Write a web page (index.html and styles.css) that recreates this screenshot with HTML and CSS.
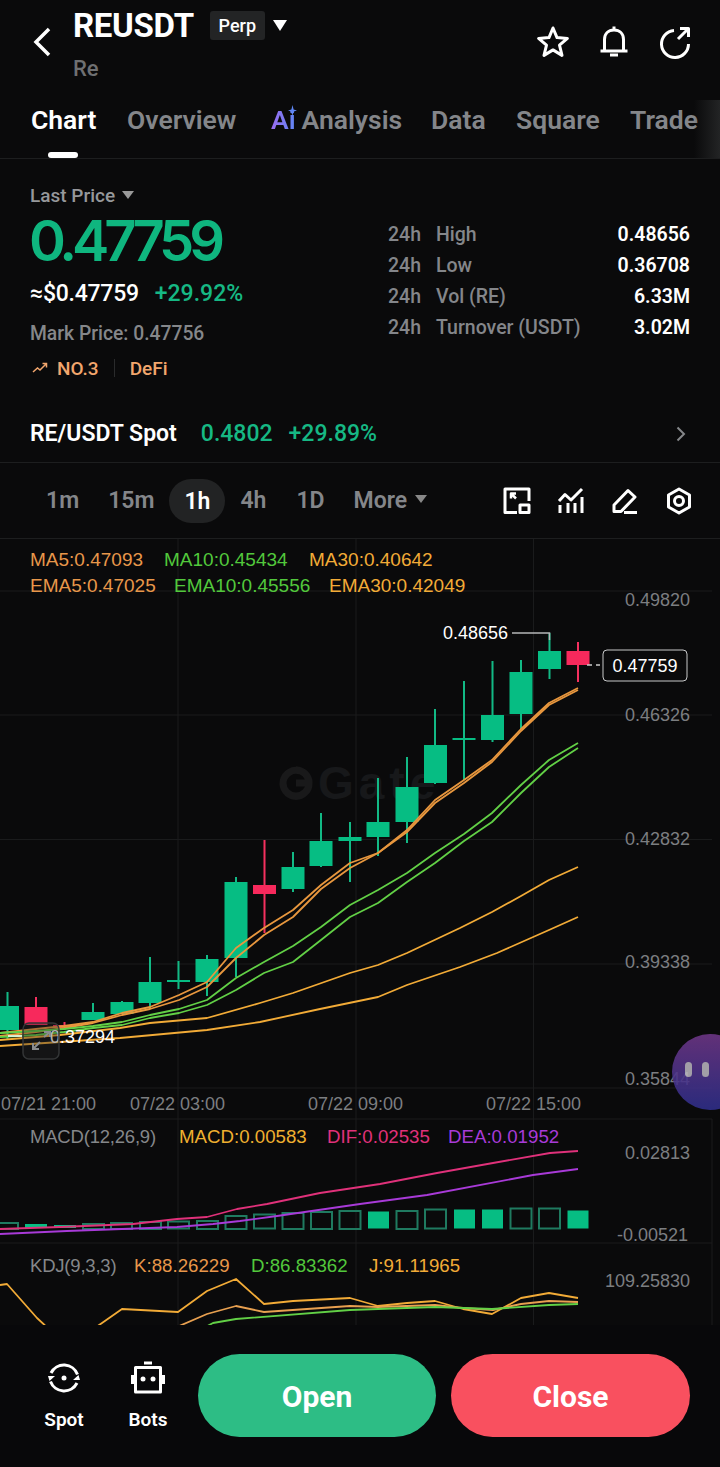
FILE: index.html
```html
<!DOCTYPE html>
<html>
<head>
  <meta charset="UTF-8">
  <title>REUSDT Perp</title>
  <link rel="stylesheet" href="styles.css">
</head>
<body>
<div class="page">

  <div class="header">
    <svg class="back" width="20" height="32" viewBox="0 0 20 32"><path d="M17 3 L4 16 L17 29" /></svg>
    <div class="titleCol">
      <div class="titleRow">
        <span class="symbol">REUSDT</span>
        <span class="badge">Perp</span>
        <span class="caret caretBig"></span>
      </div>
      <div class="subName">Re</div>
    </div>
    <div class="headerIcons">
      <svg class="icon" width="36" height="36" viewBox="0 0 36 36"><path d="M18 4 L22 13.6 L32.4 14.4 L24.5 21.2 L27 31.4 L18 25.9 L9 31.4 L11.5 21.2 L3.6 14.4 L14 13.6 Z" /></svg>
      <svg class="icon" width="36" height="36" viewBox="0 0 36 36"><path d="M8.500 27 V15.500 C8.500 9.500 12.500 6 18 6 C23.500 6 27.500 9.500 27.500 15.500 V27 M4.500 27 H31.500 M18 2.500 V6" /><path class="solid" d="M14 29.500 H22 V32.500 H14 Z" /></svg>
      <svg class="icon" width="36" height="36" viewBox="0 0 36 36"><path d="M17 6.500 A13.500 13.500 0 1 0 31.500 20 M21 15 L31 5 M23 4.500 H31.500 V13" /></svg>
    </div>
  </div>

  <div class="tabs">
    <span class="tab tabActive">Chart</span>
    <span class="tab">Overview</span>
    <span class="tab tabAi"><span class="aiMark">Ai<svg class="spark" width="9" height="11" viewBox="0 0 9 11"><path d="M4.500 0 L5.600 4.400 L9 5.500 L5.600 6.600 L4.500 11 L3.400 6.600 L0 5.500 L3.400 4.400 Z" /></svg></span>Analysis</span>
    <span class="tab">Data</span>
    <span class="tab">Square</span>
    <span class="tab">Trade</span>
    <div class="tabFade"></div>
  </div>

  <div class="stats">
    <div class="priceCol">
      <div class="priceLabel">Last Price <span class="caret caretSmall"></span></div>
      <div class="bigPrice">0.47759</div>
      <div class="subPrice"><span class="usd">≈$0.47759</span><span class="pct">+29.92%</span></div>
      <div class="markPrice">Mark Price: 0.47756</div>
      <div class="tags">
        <svg width="16" height="12" viewBox="0 0 16 12"><path d="M1 10 L5.500 6 L8 8 L14 2 M10.500 1.500 H14.500 V5.500" /></svg>
        <span class="rank">NO.3</span>
        <span class="tagLine"></span>
        <span>DeFi</span>
      </div>
    </div>
    <div class="statsCol">
      <div class="statRow"><span class="statPeriod">24h</span><span class="statName">High</span><span class="statValue">0.48656</span></div>
      <div class="statRow"><span class="statPeriod">24h</span><span class="statName">Low</span><span class="statValue">0.36708</span></div>
      <div class="statRow"><span class="statPeriod">24h</span><span class="statName">Vol (RE)</span><span class="statValue">6.33M</span></div>
      <div class="statRow"><span class="statPeriod">24h</span><span class="statName">Turnover (USDT)</span><span class="statValue">3.02M</span></div>
    </div>
  </div>

  <div class="spotRow">
    <span class="spotName">RE/USDT Spot</span>
    <span class="spotPrice">0.4802</span>
    <span class="spotPct">+29.89%</span>
    <svg class="spotArrow" width="10" height="16" viewBox="0 0 10 16"><path d="M1.500 1.500 L8 8 L1.500 14.500" /></svg>
  </div>

  <div class="intervals">
    <span class="interval int1m">1m</span>
    <span class="interval int15">15m</span>
    <span class="interval intActive">1h</span>
    <span class="interval int4h">4h</span>
    <span class="interval int1d">1D</span>
    <span class="interval intMore">More <span class="caret caretMore"></span></span>
    <div class="toolIcons">
      <svg class="icon" width="28" height="28" viewBox="0 0 28 28"><path d="M14 25.500 H2 V2 H26 V14" /><path d="M8 6.500 L13 11.500 M8 11.500 V6.500 H13" class="thin" /><path d="M17 18 H26 V25.500 H17 Z" /></svg>
      <svg class="icon" width="28" height="28" viewBox="0 0 28 28"><path d="M2 14 L8 7.500 L14 13 L25 2" /><path d="M3 18 V26 M11 16 V26 M18 16 V26 M25 10 V26" /></svg>
      <svg class="icon" width="28" height="28" viewBox="0 0 28 28"><path d="M3 24.500 V18 L17 3.500 L24 10 L10 24.500 Z M13 25.500 H26" /></svg>
      <svg class="icon" width="28" height="28" viewBox="0 0 28 28"><path d="M14 2 L24.500 8 V20 L14 26 L3.500 20 V8 Z" /><circle cx="14" cy="14" r="4.500" /></svg>
    </div>
  </div>

  <div class="chartWrap">
    <svg class="chart" width="720" height="786" viewBox="0 539 720 786">
      <g class="grid">
        <path d="M0 591 H712 M0 715 H712 M0 839.500 H712 M0 964 H712 M0 1088 H712 M0 1119 H712 M0 1243 H712" />
        <path d="M178 539 V1325 M356 539 V1325 M533.500 539 V1325 M712 1119 V1325" />
      </g>

      <g class="mark">
        <path d="M283 783 A13 13 0 1 0 296 770 M296 783 H309 A13 13 0 1 1 300 771" />
      </g>
      <text class="markText" x="318" y="799">Gate</text>

      <g class="legend">
        <text class="cMa5" x="30" y="566">MA5:0.47093</text>
        <text class="cMa10" x="164" y="566">MA10:0.45434</text>
        <text class="cMa30" x="309" y="566">MA30:0.40642</text>
        <text class="cMa5" x="30" y="592">EMA5:0.47025</text>
        <text class="cMa10" x="174" y="592">EMA10:0.45556</text>
        <text class="cMa30" x="329" y="592">EMA30:0.42049</text>
        <text class="cGrey" x="30" y="1143">MACD(12,26,9)</text>
        <text class="cMacd small" x="179" y="1143">MACD:0.00583</text>
        <text class="cDif small" x="327" y="1143">DIF:0.02535</text>
        <text class="cDea small" x="448" y="1143">DEA:0.01952</text>
        <text class="cGrey" x="30" y="1272">KDJ(9,3,3)</text>
        <text class="cMa5 small" x="134" y="1272">K:88.26229</text>
        <text class="cMa10 small" x="251" y="1272">D:86.83362</text>
        <text class="cMa30 small" x="369" y="1272">J:91.11965</text>
      </g>

      <g class="up">
        <path class="wick" d="M7.500 992 V1040 M36 997 V1007 M93 1003 V1012 M122 1001 V1003 M150 957 V1009 M178.500 961 V989 M207 955 V996 M236 877 V977 M293 852 V892 M321 813 V867 M350 822 V882 M378 778 V856 M407 757 V843 M435 709 V784 M464 681 V780 M492.500 661 V742 M521 660 V729 M549.500 633 V679" />
        <rect x="-4" y="1006" width="23" height="24" />
        <rect x="81.500" y="1012" width="23" height="8" />
        <rect x="110.500" y="1002" width="23" height="12" />
        <rect x="138.500" y="982" width="23" height="21" />
        <rect x="167" y="980" width="23" height="2" />
        <rect x="195.500" y="959" width="23" height="23" />
        <rect x="224.500" y="882" width="23" height="76" />
        <rect x="281.500" y="867" width="23" height="22" />
        <rect x="309.500" y="841" width="23" height="25" />
        <rect x="338.500" y="837" width="23" height="4" />
        <rect x="366.500" y="822" width="23" height="15" />
        <rect x="395.500" y="787" width="23" height="35" />
        <rect x="424" y="745" width="23" height="38" />
        <rect x="452.500" y="738" width="23" height="2" />
        <rect x="481" y="715" width="23" height="25" />
        <rect x="509.500" y="672" width="23" height="42" />
        <rect x="538" y="651" width="23" height="18" />
      </g>
      <g class="down">
        <path class="wick" d="M36 997 V1025 M64.500 1022 V1030 M264.500 840 V933 M578 642 V682" />
        <rect x="24.500" y="1007" width="23" height="18" />
        <rect x="53" y="1025" width="23" height="3" />
        <rect x="253" y="885" width="23" height="9" />
        <rect x="566.500" y="651" width="23" height="14" />
      </g>

      <g class="lines">
        <polyline class="lOrange" points="0,1033 36,1029 64,1026 93,1022 122,1013 150,1007 179,995 207,982 236,948 264,928 293,910 321,885 350,863 378,853 407,830 435,800 464,780 492,760 521,729 549,703 578,688" />
        <polyline class="lOrange" points="0,1036 36,1032 64,1028 93,1023 122,1015 150,1009 179,1000 207,987 236,958 264,935 293,917 321,889 350,868 378,853 407,832 435,803 464,783 492,762 521,731 549,705 578,690" />
        <polyline class="lGreen" points="0,1033 36,1031 64,1029 93,1026 122,1022 150,1015 179,1009 207,1000 236,978 264,962 293,946 321,927 350,905 378,890 407,873 435,853 464,834 492,813 521,785 549,760 578,743" />
        <polyline class="lGreen" points="0,1037 36,1035 64,1032 93,1028 122,1025 150,1018 179,1013 207,1005 236,990 264,973 293,962 321,940 350,917 378,903 407,882 435,863 464,841 492,822 521,793 549,767 578,748" />
        <polyline class="lYellow" points="0,1040 60,1035 120,1028 150,1023 207,1018 260,1003 293,993 350,973 378,965 407,953 460,928 492,912 521,896 549,880 578,867" />
        <polyline class="lYellow" points="0,1046 60,1042 120,1038 207,1030 260,1022 320,1009 378,997 407,985 460,967 497,953 549,930 578,917" />
      </g>

      <g class="histo">
        <rect class="hollow" x="-3" y="1223" width="21" height="6" />
        <rect x="25" y="1224" width="22" height="4" />
        <rect x="54" y="1225" width="22" height="3" />
        <rect class="hollow" x="83" y="1224" width="21" height="5" />
        <rect class="hollow" x="111" y="1223" width="21" height="6" />
        <rect class="hollow" x="140" y="1222" width="21" height="7" />
        <rect class="hollow" x="168" y="1221.500" width="21" height="7" />
        <rect class="hollow" x="197" y="1221" width="21" height="8" />
        <rect class="hollow" x="225.500" y="1216" width="21" height="13" />
        <rect class="hollow" x="254" y="1214.500" width="21" height="14" />
        <rect class="hollow" x="282.500" y="1213" width="21" height="16" />
        <rect class="hollow" x="311" y="1212" width="21" height="17" />
        <rect class="hollow" x="339.500" y="1211" width="21" height="18" />
        <rect x="368" y="1211.500" width="21" height="17" />
        <rect class="hollow" x="396.500" y="1211" width="21" height="18" />
        <rect class="hollow" x="425" y="1209.500" width="21" height="19" />
        <rect x="454" y="1209.500" width="21" height="19" />
        <rect x="482" y="1209.500" width="21" height="19" />
        <rect class="hollow" x="510.500" y="1208.500" width="21" height="20" />
        <rect class="hollow" x="539" y="1208.500" width="21" height="20" />
        <rect x="567.500" y="1210.500" width="21" height="18" />
      </g>
      <g class="lines">
        <polyline class="lDif" points="0,1229 60,1227 133,1224 177,1219 207,1217 237,1209 267,1204 320,1193 360,1187 380,1184 437,1173 493,1163 550,1153 578,1151" />
        <polyline class="lDea" points="0,1234 67,1231 177,1227 213,1224 240,1221 277,1216 360,1204 427,1195 533,1175 578,1169" />
        <polyline class="lYellow" points="0,1285 7,1284 37,1318 50,1330 92,1330 102,1323 122,1309 178,1312 207,1291 236,1279 264,1304 293,1301 350,1298 378,1306 407,1303 435,1301 463,1309 492,1314 521,1298 549,1293 578,1298" />
        <polyline class="lKdj" points="170,1330 207,1314 236,1306 264,1312 350,1306 378,1307 435,1305 463,1308 493,1310 521,1304 549,1301 578,1302" />
        <polyline class="lGreen" points="200,1330 213,1323 236,1319 350,1310 435,1307 492,1309 549,1305 578,1304" />
      </g>

      <g class="axis">
        <text x="690" y="606">0.49820</text>
        <text x="690" y="721">0.46326</text>
        <text x="690" y="845">0.42832</text>
        <text x="690" y="968">0.39338</text>
        <text x="690" y="1085">0.35844</text>
        <text x="690" y="1159">0.02813</text>
        <text x="688" y="1241">-0.00521</text>
        <text x="690" y="1287">109.25830</text>
      </g>
      <g class="times">
        <text x="1" y="1110">07/21 21:00</text>
        <text x="130" y="1110">07/22 03:00</text>
        <text x="308" y="1110">07/22 09:00</text>
        <text x="486" y="1110">07/22 15:00</text>
      </g>

      <path class="hiLine" d="M512 633 H549.500 V640" />
      <text class="hiText" x="508" y="639">0.48656</text>
      <path class="lastDash" d="M587 665 H592 M596 665 H600" />
      <rect class="lastBox" x="603" y="650" width="84" height="31" rx="4" />
      <text class="lastText" x="645" y="672">0.47759</text>
      <path class="lowLine" d="M8 1036 H22" />
      <text class="lowText" x="50" y="1043">0.37294</text>
      <rect class="zoomBox" x="23" y="1023" width="36" height="36" rx="6" />
      <path class="zoomArrow" d="M33 1049 L40 1042 M33 1043 V1049 H39 M44 1037 L50 1032 M44 1032 H50 V1037" />
    </svg>

    <div class="floatBall"><span></span><span></span></div>
  </div>

  <div class="footer">
    <div class="footItem">
      <svg class="icon" width="34" height="34" viewBox="0 0 34 34"><path d="M4 12 A14.500 14.500 0 0 1 30.500 13.500 M30 22 A14.500 14.500 0 0 1 3.500 20.500" /><path class="solid" d="M1 15 L8 15 L2.500 20 Z M33 19 L26 19 L31.500 14 Z" /><circle class="solid" cx="17" cy="17" r="2.500" /></svg>
      <span>Spot</span>
    </div>
    <div class="footItem">
      <svg class="icon" width="34" height="34" viewBox="0 0 34 34"><path d="M4.500 6.500 H29.500 V31 H4.500 Z M1.500 14 V23 M32.500 14 V23" /><path d="M13 2 H21" /><circle class="solid" cx="12" cy="18" r="2.500" /><circle class="solid" cx="22" cy="18" r="2.500" /></svg>
      <span>Bots</span>
    </div>
    <div class="bigBtn btnOpen">Open</div>
    <div class="bigBtn btnClose">Close</div>
  </div>

</div>
</body>
</html>
```

FILE: styles.css
```css
html, body {
  margin: 0;
  padding: 0;
  background-color: #0a0a0b;
}
body {
  color: #fff;
  font-family: Roboto, "Liberation Sans", sans-serif;
  font-weight: 500;
}
.page {
  width: 720px;
  height: 1467px;
  overflow: hidden;
  display: flex;
  flex-direction: column;
}

/* icons */
svg path, svg circle {
  fill: none;
}
.icon path, .icon circle {
  stroke: #fff;
  stroke-width: 3;
  stroke-linejoin: round;
}
.icon .solid {
  fill: #fff;
  stroke: none;
}
.icon .thin {
  stroke-width: 2.500;
}
.caret {
  display: inline-block;
  width: 0;
  height: 0;
  border-style: solid;
  border-color: #fff transparent transparent transparent;
}
.caretBig {
  border-width: 11px 7.500px 0 7.500px;
  margin-left: 8px;
}
.caretSmall {
  border-width: 8px 6px 0 6px;
  border-top-color: #999;
  margin-left: 2px;
  vertical-align: 3px;
}
.caretMore {
  border-width: 8px 6px 0 6px;
  border-top-color: #888;
  margin-left: 2px;
  vertical-align: 5px;
}

/* header */
.header {
  height: 100px;
  display: flex;
  flex-shrink: 0;
}
.back {
  margin: 26px 0 0 32px;
}
.back path {
  stroke: #fff;
  stroke-width: 3.500;
}
.titleCol {
  margin: 6px 0 0 21px;
}
.titleRow {
  display: flex;
  align-items: center;
  height: 38px;
}
.symbol {
  font-size: 33px;
  font-weight: 700;
  letter-spacing: -0.300px;
}
.badge {
  margin-left: 16px;
  width: 55px;
  height: 29px;
  line-height: 29px;
  text-align: center;
  background-color: #232425;
  border-radius: 3px;
  font-size: 18px;
}
.subName {
  margin-top: 12px;
  font-size: 22px;
  line-height: 26px;
  color: #6f7072;
}
.headerIcons {
  margin: 24px 27px 0 auto;
  display: flex;
  gap: 25px;
}

/* tabs */
.tabs {
  position: relative;
  height: 59px;
  flex-shrink: 0;
  border-bottom: 1px solid #1d1e1f;
  box-sizing: border-box;
  font-size: 26.500px;
  line-height: 34px;
  font-weight: 600;
  color: #84868a;
  white-space: nowrap;
}
.tab {
  position: absolute;
  top: 3px;
}
.tab:nth-child(1) { left: 31px; }
.tab:nth-child(2) { left: 127px; }
.tab:nth-child(3) { left: 271px; }
.tab:nth-child(4) { left: 431px; }
.tab:nth-child(5) { left: 516px; }
.tab:nth-child(6) { left: 630px; }
.tabActive {
  color: #fff;
}
.tabActive:after {
  content: "";
  position: absolute;
  left: 17px;
  top: 49px;
  width: 30px;
  height: 6px;
  border-radius: 3px;
  background-color: #fff;
}
.aiMark {
  position: relative;
  margin-right: 6px;
  background: linear-gradient(90deg, #9a6cf0, #5f87f5);
  -webkit-background-clip: text;
  background-clip: text;
  color: transparent;
}
.spark {
  position: absolute;
  right: -1px;
  top: 1px;
}
.spark path {
  fill: #5f87f5;
}
.tabFade {
  position: absolute;
  right: 0;
  top: 0;
  bottom: 0;
  width: 26px;
  background: linear-gradient(90deg, rgba(30, 30, 31, 0), #232425);
}

/* price block */
.stats {
  height: 222px;
  flex-shrink: 0;
  padding: 0 30px;
  box-sizing: border-box;
  display: flex;
  justify-content: space-between;
}
.priceLabel {
  margin-top: 26px;
  font-size: 19px;
  line-height: 22px;
  color: #96989b;
}
.bigPrice {
  margin: 6px 0 0 -1px;
  font-family: Inter, Roboto, sans-serif;
  font-size: 56px;
  line-height: 56px;
  font-weight: 600;
  letter-spacing: -5.100px;
  color: #0fb67f;
}
.subPrice {
  margin-top: 11px;
  line-height: 28px;
  font-size: 23px;
  display: flex;
  gap: 16px;
}
.usd {
  letter-spacing: -0.250px;
}
.pct {
  color: #16b884;
}
.markPrice {
  margin-top: 14px;
  font-size: 19.300px;
  line-height: 24px;
  color: #85878a;
}
.tags {
  margin-top: 10px;
  height: 24px;
  display: flex;
  align-items: center;
  font-size: 19px;
  color: #f2a66d;
}
.tags svg {
  margin-left: 2px;
}
.tags svg path {
  stroke: #f2a66d;
  stroke-width: 1.500;
}
.rank {
  margin-left: 9px;
}
.tagLine {
  width: 1px;
  height: 18px;
  margin: 0 15px;
  background-color: #2a2b2c;
}
.statsCol {
  width: 302px;
  padding-top: 60px;
}
.statRow {
  display: flex;
  height: 31px;
  line-height: 31px;
  font-size: 19.500px;
  color: #84868a;
}
.statPeriod {
  width: 48px;
}
.statValue {
  margin-left: auto;
  color: #fff;
  font-weight: 600;
}

/* spot link */
.spotRow {
  height: 82px;
  flex-shrink: 0;
  box-sizing: border-box;
  padding: 33px 30px 0 30px;
  border-bottom: 1px solid #1d1e1f;
  display: flex;
  align-items: flex-start;
  font-size: 23px;
  line-height: 40px;
}
.spotName {
  font-weight: 600;
}
.spotPrice {
  margin-left: 24px;
  color: #16b884;
}
.spotPct {
  margin-left: 16px;
  color: #16b884;
}
.spotArrow {
  margin: 12px 4px 0 auto;
}
.spotArrow path {
  stroke: #85878a;
  stroke-width: 2;
}

/* interval bar */
.intervals {
  position: relative;
  height: 76px;
  flex-shrink: 0;
  box-sizing: border-box;
  border-bottom: 1px solid #1d1e1f;
  display: flex;
  align-items: center;
  font-size: 23px;
  font-weight: 600;
  color: #84868a;
}
.interval {
  flex-shrink: 0;
  line-height: 46px;
}
.int1m { margin-left: 46px; }
.int15 { margin-left: 29px; }
.intActive {
  margin-left: 15px;
  width: 56px;
  height: 44px;
  line-height: 46px;
  text-align: center;
  border-radius: 22px;
  background-color: #222324;
  color: #fff;
}
.int4h { margin-left: 15px; }
.int1d { margin-left: 30px; }
.intMore { margin-left: 29px; }
.toolIcons {
  margin-left: auto;
  margin-right: 27px;
  display: flex;
  gap: 26px;
}

/* chart */
.chartWrap {
  position: relative;
  height: 786px;
  flex-shrink: 0;
}
.chart {
  display: block;
}
.chart text {
  font-family: "Liberation Sans", Arial, sans-serif;
  font-weight: 400;
}
.grid path {
  stroke: #1a1b1c;
  stroke-width: 1;
}
.mark path {
  stroke: #19191a;
  stroke-width: 7;
}
.chart .markText {
  font-size: 46px;
  font-weight: 700;
  letter-spacing: 5px;
  fill: #17181a;
}
.legend text {
  font-size: 19px;
}
.legend .small {
  font-size: 18.700px;
}
.legend .cGrey {
  font-size: 18.500px;
  letter-spacing: -0.200px;
}
.cMa5 { fill: #e8974a; }
.cMa10 { fill: #52c83c; }
.cMa30 { fill: #f2ab37; }
.cGrey { fill: #85878a; }
.cMacd { fill: #f0b030; }
.cDif { fill: #e0317a; }
.cDea { fill: #a83ad8; }
.up .wick {
  stroke: #12b985;
  stroke-width: 2;
}
.up rect { fill: #06bd83; }
.down .wick {
  stroke: #f5305f;
  stroke-width: 2;
}
.down rect { fill: #f7295c; }
.lines polyline {
  fill: none;
  stroke-width: 1.800;
  stroke-linejoin: round;
}
.lOrange { stroke: #e8973e; }
.lGreen { stroke: #62d046; }
.lYellow { stroke: #f2ab37; }
.lKdj { stroke: #e8a050; }
.lDif { stroke: #e0317a; }
.lDea { stroke: #a83ad8; }
.histo rect { fill: #06bd83; }
.histo .hollow {
  fill: none;
  stroke: #1f7a60;
  stroke-width: 2;
}
.axis text {
  font-size: 18px;
  fill: #7c7e81;
  text-anchor: end;
}
.times text {
  font-size: 18px;
  fill: #7c7e81;
}
.hiLine {
  stroke: #b5b6b8;
  stroke-width: 1.500;
}
.chart .hiText, .chart .lowText, .chart .lastText {
  font-size: 18px;
  fill: #fff;
}
.chart .hiText {
  text-anchor: end;
}
.chart .lastText {
  text-anchor: middle;
}
.lastDash {
  stroke: #ccc;
  stroke-width: 1.500;
}
.lastBox {
  fill: #0a0a0b;
  stroke: #c8c9ca;
  stroke-width: 1;
}
.lowLine {
  stroke: #fff;
  stroke-width: 1.500;
}
.zoomBox {
  fill: rgba(40, 40, 40, 0.35);
  stroke: #333536;
  stroke-width: 1.500;
}
.zoomArrow {
  stroke: #8a8c8e;
  stroke-width: 2;
}
.floatBall {
  position: absolute;
  left: 672px;
  top: 495px;
  width: 76px;
  height: 76px;
  border-radius: 38px;
  background: linear-gradient(180deg, #6f3788, #2f2f8c);
  opacity: 0.88;
}
.floatBall span {
  position: absolute;
  top: 28px;
  width: 7px;
  height: 15px;
  border-radius: 4px;
  background-color: #b7b3bd;
}
.floatBall span:nth-child(1) { left: 13px; }
.floatBall span:nth-child(2) { left: 30px; }

/* footer */
.footer {
  flex-grow: 1;
  position: relative;
  display: flex;
  align-items: flex-start;
  background-color: #08080a;
}
.footItem {
  width: 84px;
  margin-top: 36px;
  display: flex;
  flex-direction: column;
  align-items: center;
  font-size: 19px;
  font-weight: 600;
  line-height: 22px;
  gap: 14px;
}
.footItem:first-child {
  margin-left: 22px;
}
.bigBtn {
  height: 83px;
  line-height: 86px;
  margin-top: 29px;
  text-align: center;
  border-radius: 42px;
  font-size: 30px;
  font-weight: 700;
}
.btnOpen {
  width: 238px;
  margin-left: 8px;
  background-color: #2dbd85;
}
.btnClose {
  width: 239px;
  margin-left: 15px;
  background-color: #f9505f;
}
```
